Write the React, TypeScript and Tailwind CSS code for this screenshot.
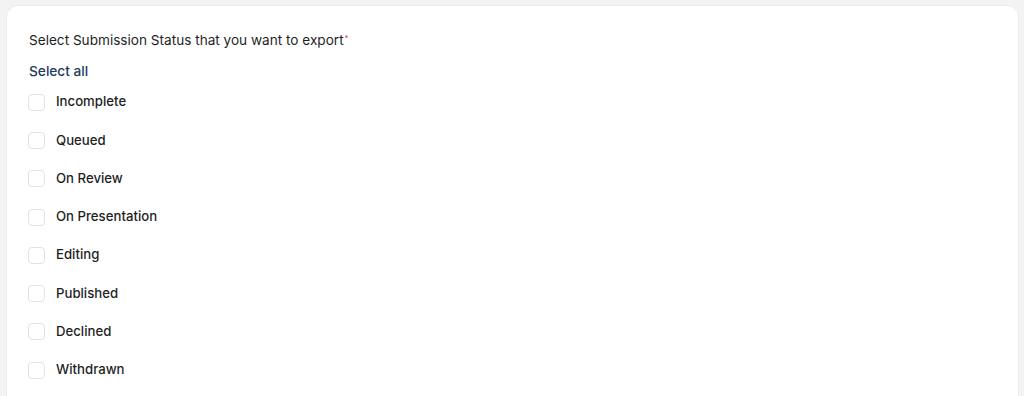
import React from "react";

const items = [
  "Incomplete",
  "Queued",
  "On Review",
  "On Presentation",
  "Editing",
  "Published",
  "Declined",
  "Withdrawn",
];

export default function App() {
  return (
    <div
      className="w-[1024px] h-[396px] bg-[#f3f3f3] pt-[5px] pl-[6px] pr-[5px] overflow-hidden"
      style={{ fontFamily: "Inter, 'Noto Sans', sans-serif" }}
    >
      <div className="bg-white rounded-t-[12px] h-[420px] border border-[#ececec] pl-[21px] pt-[25px]">
        <div className="ml-[1px] text-[13.6px] leading-[18px] text-[#1f1f1f]">
          Select Submission Status that you want to export
          <sup className="text-[#e5484d] text-[8px] relative -top-[4px] ml-[1px]">*</sup>
        </div>
        <div className="ml-[1px] mt-[13px] text-[13.7px] leading-[18px] font-medium text-[#1e3a62]">
          Select all
        </div>
        <div className="mt-[3px] flex flex-col">
          {items.map((label) => (
            <label key={label} className="flex items-center h-[38.3px] gap-[11px] cursor-pointer">
              <span className="w-[17px] h-[17px] rounded-[4px] border border-[#e2e2e2] bg-white" />
              <span className="text-[13.2px] font-medium text-[#1f1f1f]">{label}</span>
            </label>
          ))}
        </div>
      </div>
    </div>
  );
}
